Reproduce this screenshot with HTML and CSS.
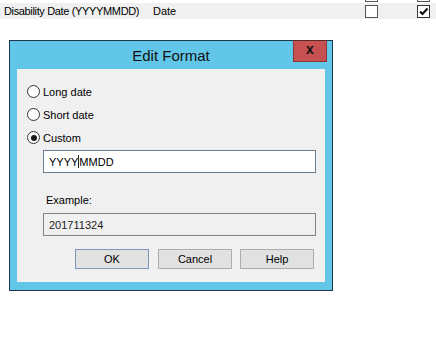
FILE: index.html
```html
<!DOCTYPE html>
<html lang="en">
<head>
  <meta charset="UTF-8" />
  <title>Edit Format</title>
  <link rel="stylesheet" href="styles.css">
</head>
<body>
  <div class="grid-row prev-row">
    <span></span><span></span>
    <span class="check-stub"></span>
    <span class="check-stub"></span>
  </div>
  <div class="grid-row field-row">
    <span class="field-name">Disability Date (YYYYMMDD)</span>
    <span class="field-type">Date</span>
    <span class="checkbox"></span>
    <span class="checkbox checked">
      <svg width="11" height="11" viewBox="0 0 11 11"><path d="M2 5.5 L4.5 8 L9.5 2.5" fill="none" stroke="#111" stroke-width="2.2"/></svg>
    </span>
  </div>

  <div class="dialog">
    <div class="title-bar">
      <span class="title">Edit Format</span>
      <div class="close-btn">x</div>
    </div>
    <div class="client">
      <div class="radio-row"><span class="radio"></span><span>Long date</span></div>
      <div class="radio-row"><span class="radio"></span><span>Short date</span></div>
      <div class="radio-row"><span class="radio selected"></span><span>Custom</span></div>
      <div class="textbox">YYYY<span class="caret"></span>MMDD</div>
      <div class="example-label">Example:</div>
      <div class="textbox readonly">201711324</div>
      <div class="buttons">
        <button class="default">OK</button>
        <button class="cancel">Cancel</button>
        <button class="help">Help</button>
      </div>
    </div>
  </div>
</body>
</html>
```

FILE: styles.css
```css
body {
  margin: 0;
  background: #fff;
  font-family: "Liberation Sans", Arial, sans-serif;
  font-size: 11px;
  color: #000;
}
.grid-row {
  display: grid;
  grid-template-columns: 149px 1fr 52px 19px;
  padding-left: 4px;
  align-items: center;
}
.prev-row {
  height: 3px;
  align-items: start;
}
.check-stub {
  width: 11px;
  height: 1px;
  border: 1px solid #555;
  border-top: none;
}
.field-row {
  height: 16px;
  background: #f0f0f0;
  font-size: 11px;
  white-space: nowrap;
}
.field-name {
  letter-spacing: -0.35px;
}
.checkbox {
  width: 11px;
  height: 11px;
  border: 1px solid #555;
  background: #fff;
  display: flex;
  align-items: center;
  justify-content: center;
}
.checkbox.checked {
  border-color: #333;
}

.dialog {
  width: 308px;
  margin: 21px 0 0 9px;
  border: 1px solid #1f3446;
  background: #61c6e8;
  padding: 0 7px 8px 7px;
}
.title-bar {
  position: relative;
  height: 28px;
  display: flex;
  align-items: center;
  justify-content: center;
}
.title {
  font-size: 15px;
  color: #111;
  margin-top: 1px;
}
.close-btn {
  position: absolute;
  top: -1px;
  right: -2px;
  width: 32px;
  height: 20px;
  background: #c75050;
  border: 1px solid #8a3838;
  border-top-color: #5a2a2a;
  color: #111;
  font-weight: bold;
  font-size: 14px;
  line-height: 16px;
  text-align: center;
}
.client {
  height: 213px;
  background: #f0f0f0;
  padding: 11px 0 0 10px;
  box-sizing: border-box;
}
.radio-row {
  height: 23px;
  display: flex;
  align-items: center;
  gap: 3px;
}
.radio {
  width: 11px;
  height: 11px;
  border: 1px solid #333;
  border-radius: 50%;
  background: #fff;
  display: flex;
  align-items: center;
  justify-content: center;
}
.radio.selected::after {
  content: "";
  width: 6px;
  height: 6px;
  border-radius: 50%;
  background: #1a1a1a;
}
.textbox {
  margin: 1px 0 0 16px;
  width: 266px;
  height: 21px;
  border: 1px solid #6d7d8e;
  background: #fff;
  padding-left: 5px;
  display: flex;
  align-items: center;
}
.caret {
  width: 1px;
  height: 13px;
  background: #222;
}
.example-label {
  margin: 16px 0 0 19px;
  height: 24px;
  line-height: 23px;
}
.textbox.readonly {
  margin-top: 0;
  background: #f0f0f0;
  border-color: #838383;
  color: #222;
}
.buttons {
  display: flex;
  margin: 13px 0 0 48px;
}
button {
  width: 74px;
  height: 20px;
  margin-right: 8px;
  font-family: "Liberation Sans", Arial, sans-serif;
  font-size: 11px;
  color: #000;
  background: #e1e1e1;
  border: 1px solid #adadad;
  padding: 0;
}
button.default {
  border-color: #7c98bd;
  margin-right: 9px;
}
```
